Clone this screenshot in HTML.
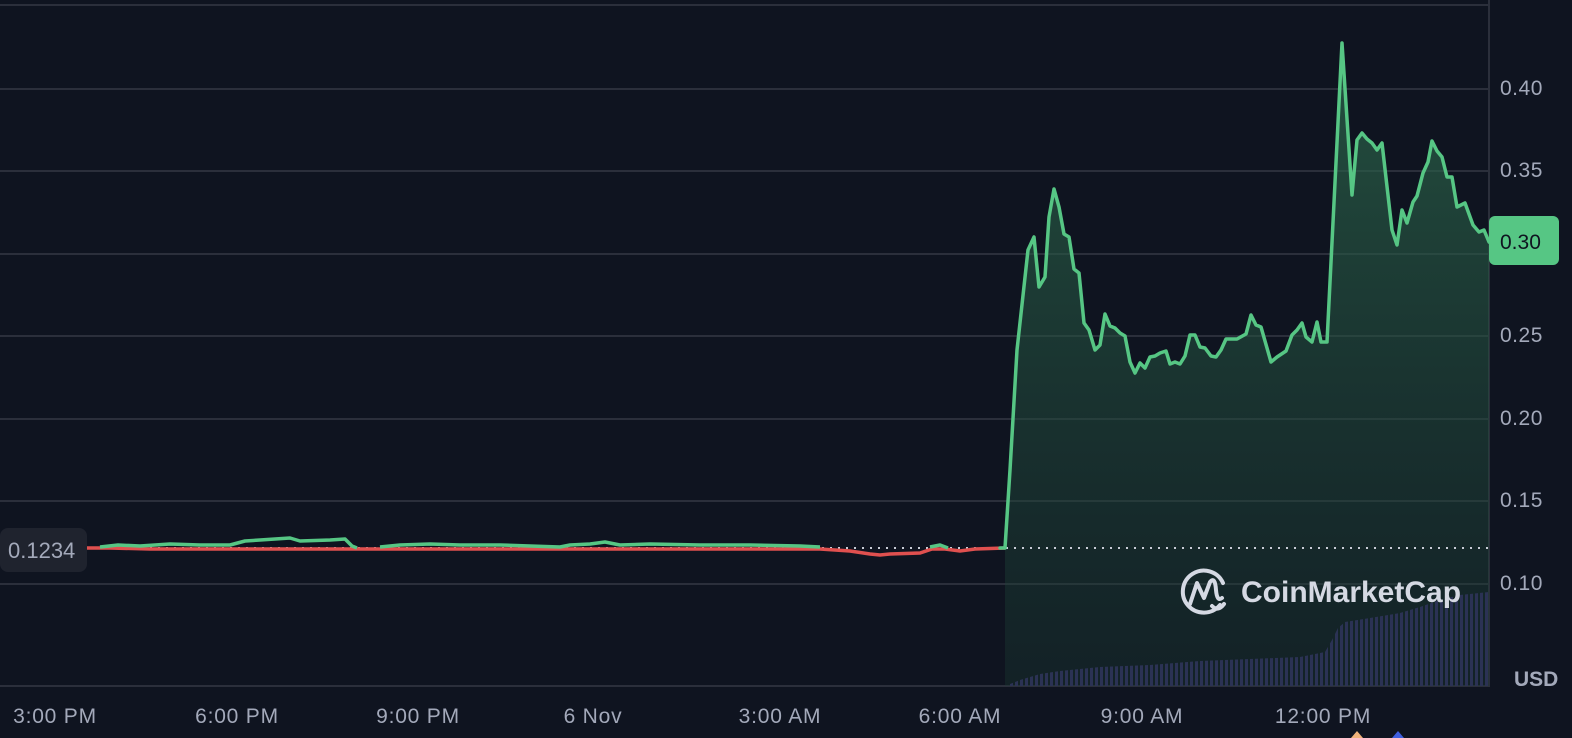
<!DOCTYPE html>
<html><head><meta charset="utf-8"><style>
html,body{margin:0;padding:0;background:#0f1420;width:1572px;height:738px;overflow:hidden;font-family:"Liberation Sans",sans-serif}
.ax{position:absolute;left:1500px;color:#a3a9ba;font-size:21px;letter-spacing:0.5px}
.bt{position:absolute;top:705px;color:#a3a9ba;font-size:21px;letter-spacing:0.8px;transform:translateX(-50%);white-space:nowrap}
</style></head><body>
<svg width="1572" height="738" style="position:absolute;left:0;top:0">
<defs>
<linearGradient id="g" x1="0" y1="0" x2="0" y2="1"><stop offset="0" stop-color="#2e6b4e" stop-opacity="0.7"/><stop offset="1" stop-color="#1a3a32" stop-opacity="0.35"/></linearGradient>
<pattern id="vb" width="5" height="10" patternUnits="userSpaceOnUse" x="1010"><rect x="0" y="0" width="3" height="10" fill="#2b3254"/></pattern>
</defs>
<g stroke="#2b2f3b" stroke-width="2">
<line x1="0" y1="5" x2="1489" y2="5"/>
<line x1="0" y1="89" x2="1489" y2="89"/><line x1="0" y1="171" x2="1489" y2="171"/><line x1="0" y1="254" x2="1489" y2="254"/><line x1="0" y1="336" x2="1489" y2="336"/><line x1="0" y1="419" x2="1489" y2="419"/><line x1="0" y1="501" x2="1489" y2="501"/><line x1="0" y1="584" x2="1489" y2="584"/>
<line x1="0" y1="686" x2="1490" y2="686"/><line x1="1489" y1="0" x2="1489" y2="686"/>
</g>
<polygon fill="url(#g)" points="1005,548 1010,470 1017,350 1028,250 1034,237 1039,287 1045,277 1049,217 1054,189 1059,207 1064,234 1069,237 1074,269 1079,273 1084,323 1089,330 1095,350 1100,345 1105,314 1110,326 1115,328 1120,333 1125,336 1130,362 1135,373 1140,363 1145,368 1150,357 1155,356 1160,353 1166,351 1170,364 1175,362 1180,364 1185,356 1190,335 1195,335 1200,347 1205,348 1211,356 1216,357 1221,350 1226,339 1237,339 1246,334 1251,315 1256,325 1261,327 1271,362 1277,357 1286,351 1292,335 1297,330 1302,323 1306,337 1312,342 1317,322 1321,342 1327,342 1342,43 1352,195 1357,140 1362,133 1367,139 1372,143 1377,150 1382,143 1392,230 1397,245 1402,210 1407,223 1413,202 1417,196 1423,173 1428,162 1432,141 1437,151 1442,157 1447,177 1452,177 1457,207 1465,203 1473,225 1479,232 1484,230 1489,242 1489,686 1005,686"/>
<polygon fill="url(#vb)" points="1010,686 1010,684 1020,680 1030,677 1040,674 1060,671 1100,667 1150,665 1200,661 1250,659 1300,657 1325,652 1332,640 1338,628 1345,622 1370,618 1400,613 1420,607 1440,600 1460,595 1489,592 1489,686"/>
<line x1="86" y1="548" x2="1489" y2="548" stroke="#c8ccd6" stroke-width="2" stroke-dasharray="2 6"/>
<polyline fill="none" stroke="#e0504f" stroke-width="3.5" points="86,548 110,548 150,549 300,549 350,549 370,549 420,549 520,549 545,549 565,549 820,549 850,551 870,554 880,555 890,554 920,553 932,549 945,549 960,551 975,549 1005,548"/>
<polyline fill="none" stroke="#56c684" stroke-width="3.5" stroke-linejoin="round" points="100,547 118,545 140,546 170,544 200,545 230,545 245,541 260,540 290,538 300,541 330,540 345,539 352,546 357,548"/>
<polyline fill="none" stroke="#56c684" stroke-width="3.5" stroke-linejoin="round" points="380,547 400,545 430,544 460,545 500,545 530,546 560,547 570,545 590,544 605,542 620,545 650,544 700,545 750,545 800,546 820,547"/>
<polyline fill="none" stroke="#56c684" stroke-width="3.5" stroke-linejoin="round" points="930,547 940,545 948,548"/>
<polyline fill="none" stroke="#56c684" stroke-width="3.5" stroke-linejoin="round" stroke-linecap="round" points="1000,548 1005,548 1010,470 1017,350 1028,250 1034,237 1039,287 1045,277 1049,217 1054,189 1059,207 1064,234 1069,237 1074,269 1079,273 1084,323 1089,330 1095,350 1100,345 1105,314 1110,326 1115,328 1120,333 1125,336 1130,362 1135,373 1140,363 1145,368 1150,357 1155,356 1160,353 1166,351 1170,364 1175,362 1180,364 1185,356 1190,335 1195,335 1200,347 1205,348 1211,356 1216,357 1221,350 1226,339 1237,339 1246,334 1251,315 1256,325 1261,327 1271,362 1277,357 1286,351 1292,335 1297,330 1302,323 1306,337 1312,342 1317,322 1321,342 1327,342 1342,43 1352,195 1357,140 1362,133 1367,139 1372,143 1377,150 1382,143 1392,230 1397,245 1402,210 1407,223 1413,202 1417,196 1423,173 1428,162 1432,141 1437,151 1442,157 1447,177 1452,177 1457,207 1465,203 1473,225 1479,232 1484,230 1489,242"/>
<rect x="0" y="528" width="87" height="44" rx="8" fill="#1f232e"/>
<text x="8" y="558" font-size="22" fill="#a3a9ba" font-family="Liberation Sans">0.1234</text>
<rect x="1489" y="216" width="70" height="49" rx="6" fill="#56c684"/>
<text x="1500" y="249" font-size="21" fill="#0f1420" font-family="Liberation Sans">0.30</text>
<g fill="none" stroke="#d5d9e3" stroke-width="4" stroke-linecap="round" stroke-linejoin="round">
<path d="M1220,605 A21,21 0 1 1 1223,583"/>
<path d="M1190,604 L1197,583 L1204,598 L1210,582 Q1215,576 1216,590 Q1217,602 1222,598"/>
<path d="M1212,606 Q1218,612 1224,604"/>
</g>
<text x="1241" y="602" font-size="30" font-weight="bold" fill="#d5d9e3" font-family="Liberation Sans">CoinMarketCap</text>
<polygon points="1351,738 1357,731 1363,738" fill="#f0b27a"/>
<polygon points="1392,738 1398,731 1404,738" fill="#3f5fe0"/>
</svg>
<div class="ax" style="top:77px">0.40</div>
<div class="ax" style="top:159px">0.35</div>
<div class="ax" style="top:324px">0.25</div>
<div class="ax" style="top:407px">0.20</div>
<div class="ax" style="top:489px">0.15</div>
<div class="ax" style="top:572px">0.10</div>
<div style="position:absolute;left:1514px;top:668px;color:#a3a9ba;font-size:21px;font-weight:bold">USD</div>
<div class="bt" style="left:55px">3:00 PM</div>
<div class="bt" style="left:237px">6:00 PM</div>
<div class="bt" style="left:418px">9:00 PM</div>
<div class="bt" style="left:593px">6 Nov</div>
<div class="bt" style="left:780px">3:00 AM</div>
<div class="bt" style="left:960px">6:00 AM</div>
<div class="bt" style="left:1142px">9:00 AM</div>
<div class="bt" style="left:1323px">12:00 PM</div>
</body></html>
